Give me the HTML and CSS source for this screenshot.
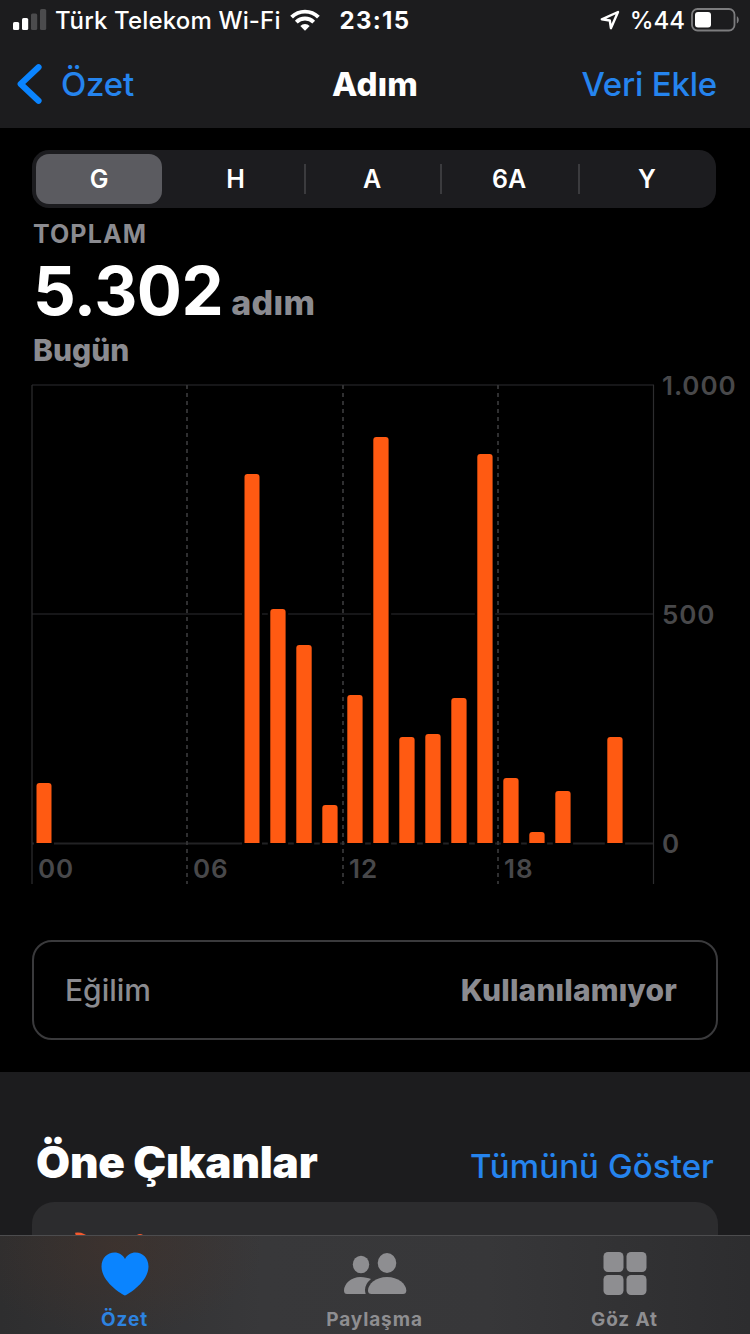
FILE: index.html
```
<!DOCTYPE html>
<html lang="tr">
	<head>
		<meta charset="UTF-8" />
		<meta name="viewport" content="width=device-width, initial-scale=1.0" />
		<title>Adım</title>
		<link rel="stylesheet" href="styles.css">
	</head>

	<body>
		<div class="phone">
			<header class="top">
				<div class="status-bar">
					<svg class="signal" width="34" height="22" viewBox="0 0 34 22">
						<rect x="0" y="13" width="6.2" height="8" rx="1.6" fill="#fff" />
						<rect x="9" y="9" width="6.2" height="12" rx="1.6" fill="#fff" />
						<rect x="18" y="4.500" width="6.200" height="16.500" rx="1.6" fill="#4b4b4d" />
						<rect x="27" y="0" width="6.2" height="21" rx="1.6" fill="#4b4b4d" />
					</svg>
					<span class="carrier">Türk Telekom Wi-Fi</span>
					<svg class="wifi" width="30" height="22" viewBox="0 0 30 22">
						<g fill="none" stroke="#fff" stroke-width="3.900">
							<path d="M1.600 8.200a19 19 0 0 1 26.800 0" />
							<path d="M6.300 13.100a12.300 12.300 0 0 1 17.400 0" />
						</g>
						<path d="M15 21.700l-4.700-4.700a6.700 6.700 0 0 1 9.400 0z" fill="#fff" />
					</svg>
					<span class="clock">23:15</span>
					<svg class="location" width="20" height="20" viewBox="0 0 20 20">
						<path d="M18 2L10.900 18.200 9.800 10.500 1.800 9.300z" fill="none" stroke="#fff" stroke-width="2.400" stroke-linejoin="round" />
					</svg>
					<span class="percent">%44</span>
					<svg class="battery" width="49" height="24" viewBox="0 0 49 24">
						<rect x="1" y="1" width="42.500" height="21.500" rx="5.500" fill="none" stroke="#7c7c7e" stroke-width="1.800" />
						<rect x="4" y="4" width="16" height="15.500" rx="3" fill="#fff" />
						<path d="M45.800 8.200c2.600 1 2.600 6.200 0 7.200z" fill="#7c7c7e" />
					</svg>
				</div>
				<nav class="nav-bar">
					<a class="back">
						<svg width="26" height="42" viewBox="0 0 26 42">
							<path d="M21.500 4.200L3.700 21l17.800 16.800" fill="none" stroke="#0a84ff" stroke-width="6.200" stroke-linecap="round" stroke-linejoin="round" />
						</svg>
						<span>Özet</span>
					</a>
					<h1>Adım</h1>
					<a class="add">Veri Ekle</a>
				</nav>
			</header>

			<main>
				<div class="segments">
					<span class="segment selected">G</span>
					<span class="segment">H</span>
					<span class="segment divided">A</span>
					<span class="segment divided">6A</span>
					<span class="segment divided">Y</span>
				</div>

				<section class="summary">
					<div class="total-label">TOPLAM</div>
					<div class="total"><span class="number">5.302</span><span class="unit">adım</span></div>
					<div class="date">Bugün</div>
				</section>

				<svg class="chart" width="750" height="520" viewBox="0 370 750 520">
					<g fill="none" stroke="#222224" stroke-width="2">
						<path d="M32 385H654" stroke="#161618" />
						<path d="M32 614H654" stroke="#161618" />
						<path d="M32 843.500H654" stroke="#222224" />
						<path d="M32 385V884M653.500 385V884" stroke="#2d2d2f" stroke-width="1.200" />
						<path d="M187 385V884M343 385V884M498 385V884" stroke="#353537" stroke-width="1.800" stroke-dasharray="4 4" />
					</g>
					<!-- each bar clears the grid lines a little on both sides -->
					<g class="bars">
						<path d="M36.500 846V786q0-3 3-3h9q3 0 3 3V846z" />
						<path d="M244.500 846V477q0-3 3-3h9q3 0 3 3V846z" />
						<path d="M270.300 846V612q0-3 3-3h9.300q3 0 3 3V846z" />
						<path d="M296.300 846V648q0-3 3-3h9.400q3 0 3 3V846z" />
						<path d="M322.300 846V808q0-3 3-3h9.300q3 0 3 3V846z" />
						<path d="M347.300 846V698q0-3 3-3h9.300q3 0 3 3V846z" />
						<path d="M373.300 846V440q0-3 3-3h9.300q3 0 3 3V846z" />
						<path d="M399.300 846V740q0-3 3-3h9.300q3 0 3 3V846z" />
						<path d="M425.300 846V737q0-3 3-3h9.300q3 0 3 3V846z" />
						<path d="M451.300 846V701q0-3 3-3h9.300q3 0 3 3V846z" />
						<path d="M477.300 846V457q0-3 3-3h9.300q3 0 3 3V846z" />
						<path d="M503.300 846V781q0-3 3-3h9.300q3 0 3 3V846z" />
						<path d="M529.300 846V835q0-3 3-3h9.300q3 0 3 3V846z" />
						<path d="M555.300 846V794q0-3 3-3h9.300q3 0 3 3V846z" />
						<path d="M607.300 846V740q0-3 3-3h9.300q3 0 3 3V846z" />
					</g>
					<g class="bar-feet">
						<path d="M34 843h20v3.500H34zM242 843h20v3.500h-20zM268 843h20v3.500h-20zM294 843h20v3.500h-20zM320 843h20v3.500h-20zM345 843h20v3.500h-20zM371 843h20v3.500h-20zM397 843h20v3.500h-20zM423 843h20v3.500h-20zM449 843h20v3.500h-20zM475 843h20v3.500h-20zM501 843h20v3.500h-20zM527 843h20v3.500h-20zM553 843h20v3.500h-20zM605 843h20v3.500h-20z" />
					</g>
					<g class="axis">
						<text x="662" y="395">1.000</text>
						<text x="662" y="624">500</text>
						<text x="662" y="853">0</text>
						<text x="38" y="878">00</text>
						<text x="193" y="878">06</text>
						<text x="349" y="878">12</text>
						<text x="504" y="878">18</text>
					</g>
				</svg>

				<div class="trend">
					<span class="trend-name">Eğilim</span>
					<span class="trend-value">Kullanılamıyor</span>
				</div>
			</main>

			<section class="highlights">
				<div class="highlights-head">
					<h2>Öne Çıkanlar</h2>
					<a>Tümünü Göster</a>
				</div>
				<div class="highlight-card">
					<svg width="80" height="6" viewBox="0 0 80 6">
						<path d="M0 .8q5-.8 9 1.200l4 2H1z" fill="#f5592d" />
						<path d="M62 4v-1q3-2 6 0v1z" fill="#f5592d" />
					</svg>
				</div>
			</section>

			<nav class="tab-bar">
				<a class="tab active">
					<svg width="48" height="44" viewBox="0 0 48 44">
						<path d="M24 43.500C21 42.500 .5 30 .5 14.500 .5 6 6.500 .5 13.500 .5 18 .5 22 3 24 7 26 3 30 .5 34.500 .5 41.500 .5 47.500 6 47.500 14.500 47.500 30 27 42.500 24 43.500z" fill="#0a84ff" />
					</svg>
					<span>Özet</span>
				</a>
				<a class="tab">
					<svg width="64" height="44" viewBox="0 0 64 44" fill="#8e8e91">
						<ellipse cx="18" cy="12.500" rx="8.200" ry="8.800" />
						<ellipse cx="44" cy="11" rx="9.300" ry="10" />
						<path d="M28 27Q22 32 22 38q0 2 .7 4H4q-3 0-3-3.500C1 32 8 25 17.500 25 21.500 25 25.500 26 28 27z" />
						<path d="M28.500 42q-3.500 0-3.500-3.500C25 32 33 25 44 25s19.300 7 19.300 13.500Q63.300 42 60 42z" />
					</svg>
					<span>Paylaşma</span>
				</a>
				<a class="tab">
					<svg width="44" height="44" viewBox="0 0 44 44" fill="#8e8e91">
						<rect x=".5" y="0" width="20" height="20" rx="4.500" />
						<rect x="23.500" y="0" width="20" height="20" rx="4.500" />
						<rect x=".5" y="23" width="20" height="20" rx="4.500" />
						<rect x="23.500" y="23" width="20" height="20" rx="4.500" />
					</svg>
					<span>Göz At</span>
				</a>
			</nav>
		</div>
	</body>
</html>
```

FILE: styles.css
```
html, body {
	margin: 0;
	padding: 0;
	background-color: #000;
	font-family: Inter, "Liberation Sans", sans-serif;
}

h1, h2 {
	margin: 0;
}

svg {
	display: block;
	flex: none;
}

.phone {
	position: relative;
	width: 750px;
	height: 1334px;
	overflow: hidden;
	color: #fff;
	white-space: nowrap;
}

.top {
	height: 128px;
	background-color: #1c1c1e;
}

.status-bar {
	display: flex;
	align-items: center;
	height: 40px;
	padding: 0 13px;
	font-size: 24px;
	font-weight: 500;
}

.signal {
	margin-right: 8px;
}

.wifi {
	margin-left: 9px;
}

.carrier {
	letter-spacing: 0.15px;
}

.clock {
	margin-left: 20px;
	font-weight: 700;
	letter-spacing: 1.3px;
}

.location {
	margin-left: auto;
}

.percent {
	margin: 0 6px 0 10px;
}

.battery {
	margin-right: -3px;
}

.nav-bar {
	display: grid;
	grid-template-columns: 1fr auto 1fr;
	align-items: center;
	height: 88px;
	padding: 0 17px;
	font-size: 33px;
	font-weight: 500;
	letter-spacing: -0.2px;
	color: #2584ee;
}

.back {
	display: flex;
	align-items: center;
	gap: 18px;
}

.nav-bar h1 {
	font-size: 33px;
	font-weight: 800;
	letter-spacing: 0.2px;
	color: #fff;
}

.add {
	padding-right: 16px;
	text-align: right;
}

.segments {
	display: grid;
	grid-template-columns: 131px 137px 136px 138px 138px;
	box-sizing: border-box;
	width: 684px;
	height: 58px;
	margin: 22px 0 0 32px;
	padding: 4px 0 4px 4px;
	border-radius: 17px;
	background-color: #1c1c1f;
	font-size: 25px;
	font-weight: 600;
}

.segment {
	display: flex;
	align-items: center;
	justify-content: center;
}

.selected {
	margin-right: 5px;
	border-radius: 13px;
	background-color: #5b5b60;
}

.divided {
	background: linear-gradient(#3b3b3e, #3b3b3e) no-repeat left center / 2px 30px;
}

.summary {
	height: 162px;
	padding: 0 33px;
	font-weight: 700;
	color: #8b8b90;
}

.total-label {
	padding-top: 10px;
	font-size: 25px;
	line-height: 32px;
	letter-spacing: 1.1px;
}

.total {
	display: flex;
	align-items: baseline;
	height: 81px;
	line-height: 82px;
}

.number {
	font-size: 67px;
	letter-spacing: -0.5px;
	color: #fff;
}

.unit {
	margin-left: 8px;
	font-size: 34px;
	font-weight: 800;
	letter-spacing: 0.3px;
}

.date {
	font-size: 30px;
	font-weight: 800;
	line-height: 38px;
}

.bars {
	fill: #ff5a12;
	stroke: #000;
	stroke-width: 5px;
	paint-order: stroke;
}

.bar-feet {
	fill: #000;
}

.axis {
	font-size: 26px;
	font-weight: 600;
	letter-spacing: 0.9px;
	fill: #48484a;
}

.trend {
	display: flex;
	align-items: center;
	justify-content: space-between;
	box-sizing: border-box;
	width: 686px;
	height: 100px;
	margin: 50px 0 32px 32px;
	padding: 0 39px 0 31px;
	border: 2px solid #3a3a3c;
	border-radius: 20px;
	font-size: 30px;
	font-weight: 500;
	color: #8b8b90;
}

.trend-value {
	font-weight: 800;
	letter-spacing: 0.15px;
}

.highlights {
	height: 262px;
	background-color: #1c1c1e;
}

.highlights-head {
	display: flex;
	align-items: baseline;
	justify-content: space-between;
	height: 68px;
	padding: 62px 36px 0;
}

.highlights-head h2 {
	font-size: 44px;
	line-height: 56px;
	font-weight: 900;
	letter-spacing: -0.2px;
}

.highlights-head a {
	font-size: 33px;
	font-weight: 500;
	letter-spacing: 0.1px;
	color: #2584ee;
}

.highlight-card {
	height: 132px;
	margin: 0 32px;
	border-radius: 22px;
	background-color: #2c2c2e;
}

.highlight-card svg {
	padding: 30px 0 0 43px;
}

/* lies over the scrolled page */
.tab-bar {
	position: absolute;
	left: 0;
	right: 0;
	bottom: 0;
	display: grid;
	grid-template-columns: repeat(3, 1fr);
	box-sizing: border-box;
	height: 99px;
	border-top: 1px solid #4c4c4e;
	background: radial-gradient(ellipse 150px 90px at 115px 10px, rgba(75, 50, 38, .4), transparent), linear-gradient(90deg, #2e2e2f, #38383a 35%, #373739 65%, #2d2d2f);
}

.tab {
	display: flex;
	flex-direction: column;
	align-items: center;
	padding: 16px 1px 0 0;
	font-size: 19px;
	font-weight: 700;
	letter-spacing: 0.9px;
	color: #8e8e91;
}

.tab span {
	margin-top: 12px;
	line-height: 24px;
}

.active {
	color: #2d83e0;
}
```
